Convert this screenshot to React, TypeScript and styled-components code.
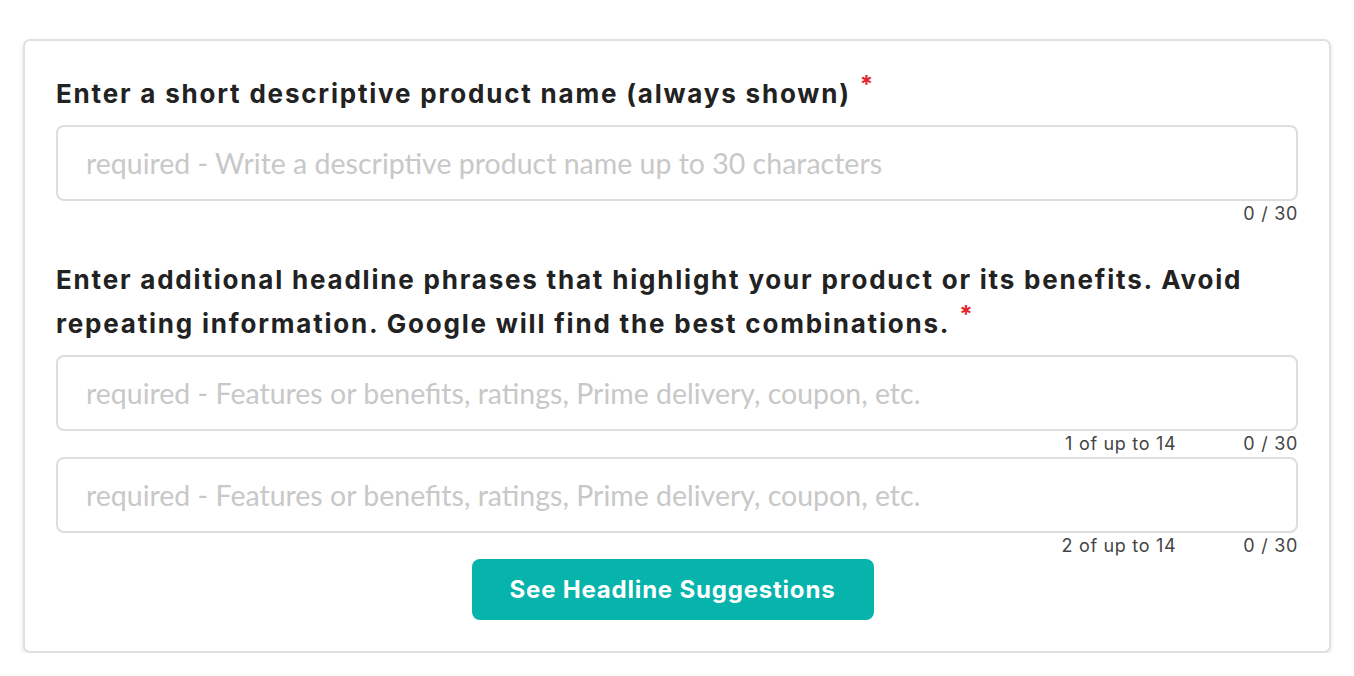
import React from "react";
import styled, { createGlobalStyle } from "styled-components";

const Global = createGlobalStyle`
  html, body { margin: 0; padding: 0; background: #ffffff; }
  body { font-family: Inter, "Noto Sans", sans-serif; }
  * { box-sizing: border-box; }
`;

const Page = styled.div`
  padding: 39px 23px 0 23px;
  width: 1354px;
`;

const Card = styled.div`
  width: 1308px;
  border: 2px solid #e0e0e0;
  border-radius: 7px;
  box-shadow: 0 2px 4px rgba(0, 0, 0, 0.12);
  padding: 31px 31px 31px 31px;
  display: flex;
  flex-direction: column;
`;

const Field = styled.div<{ $gapTop?: number }>`
  display: flex;
  flex-direction: column;
  margin-top: ${(p) => p.$gapTop ?? 0}px;
`;

const Label = styled.div`
  font-family: Inter, sans-serif;
  font-weight: 700;
  font-size: 26px;
  letter-spacing: 1.8px;
  line-height: 44px;
  color: #222222;
  margin-bottom: 9px;
`;

const Required = styled.span`
  display: inline-block;
  color: #e3262c;
  font-size: 24px;
  font-weight: 700;
  letter-spacing: 0;
  line-height: 20px;
  height: 20px;
  vertical-align: 10px;
  margin-left: 9px;
`;

const Input = styled.input`
  width: 100%;
  height: 76px;
  border: 2px solid #dedede;
  border-radius: 8px;
  padding: 0 28px;
  font-family: Lato, sans-serif;
  font-size: 28.5px;
  color: #333;
  outline: none;
  &::placeholder {
    color: #c8c8c8;
  }
`;

const Meta = styled.div`
  display: flex;
  justify-content: flex-end;
  gap: 67px;
  height: 26px;
  font-family: Inter, sans-serif;
  font-size: 18px;
  letter-spacing: 0.7px;
  line-height: 26px;
  color: #444444;
`;

const Phrase = styled.div`
  display: flex;
  flex-direction: column;
`;

const ButtonRow = styled.div`
  display: flex;
  justify-content: center;
  padding-right: 9px;
`;

const Button = styled.button`
  width: 402px;
  height: 61px;
  background: #06b4ab;
  color: #ffffff;
  border: none;
  border-radius: 8px;
  font-family: Inter, sans-serif;
  font-weight: 700;
  font-size: 24px;
  letter-spacing: 0.8px;
  cursor: pointer;
`;

export default function App() {
  return (
    <Page>
      <Global />
      <Card>
        <Field>
          <Label>
            Enter a short descriptive product name (always shown)
            <Required>*</Required>
          </Label>
          <Input placeholder="required - Write a descriptive product name up to 30 characters" />
          <Meta>
            <span>0 / 30</span>
          </Meta>
        </Field>
        <Field $gapTop={31}>
          <Label>
            Enter additional headline phrases that highlight your product or its benefits. Avoid
            repeating information. Google will find the best combinations.
            <Required>*</Required>
          </Label>
          <Phrase>
            <Input placeholder="required - Features or benefits, ratings, Prime delivery, coupon, etc." />
            <Meta>
              <span>1 of up to 14</span>
              <span>0 / 30</span>
            </Meta>
          </Phrase>
          <Phrase>
            <Input placeholder="required - Features or benefits, ratings, Prime delivery, coupon, etc." />
            <Meta>
              <span>2 of up to 14</span>
              <span>0 / 30</span>
            </Meta>
          </Phrase>
        </Field>
        <ButtonRow>
          <Button>See Headline Suggestions</Button>
        </ButtonRow>
      </Card>
    </Page>
  );
}
